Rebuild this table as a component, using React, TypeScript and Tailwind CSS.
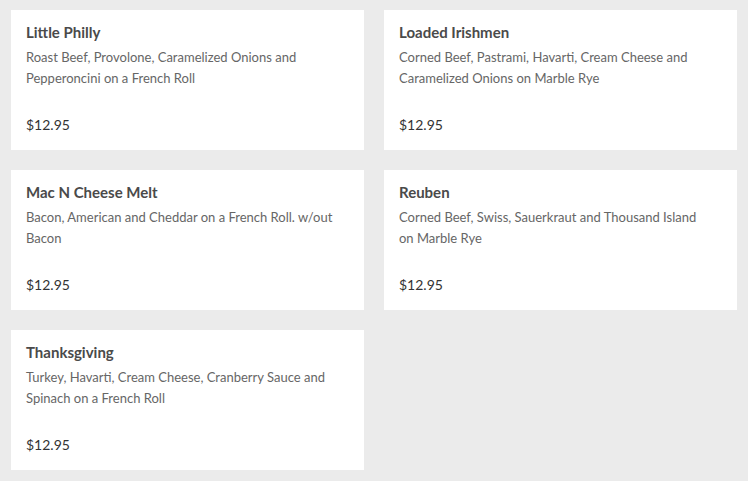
import React from "react";

const items = [
  { name: "Little Philly", desc: "Roast Beef, Provolone, Caramelized Onions and Pepperoncini on a French Roll", price: "$12.95" },
  { name: "Loaded Irishmen", desc: "Corned Beef, Pastrami, Havarti, Cream Cheese and Caramelized Onions on Marble Rye", price: "$12.95" },
  { name: "Mac N Cheese Melt", desc: "Bacon, American and Cheddar on a French Roll. w/out Bacon", price: "$12.95" },
  { name: "Reuben", desc: "Corned Beef, Swiss, Sauerkraut and Thousand Island on Marble Rye", price: "$12.95" },
  { name: "Thanksgiving", desc: "Turkey, Havarti, Cream Cheese, Cranberry Sauce and Spinach on a French Roll", price: "$12.95" },
];

export default function App() {
  return (
    <div className="min-h-[481px] w-[748px] bg-[#ebebeb] pt-[10px] pl-[11px] pr-[11px] pb-[11px]" style={{ fontFamily: "Lato, 'Open Sans', sans-serif" }}>
      <div className="grid grid-cols-2 gap-x-[20px] gap-y-[20px]">
        {items.map((it) => (
          <div key={it.name} className="h-[140px] bg-white px-[15px] pt-[12px] flex flex-col">
            <div className="text-[15px] leading-[20px] font-bold text-[#4a4a4a]">{it.name}</div>
            <div className="mt-[5px] text-[13px] leading-[21px] text-[#666666] pr-[8px]">{it.desc}</div>
            <div className="mt-auto mb-[15px] text-[14px] leading-[20px] text-[#333333]">{it.price}</div>
          </div>
        ))}
      </div>
    </div>
  );
}
